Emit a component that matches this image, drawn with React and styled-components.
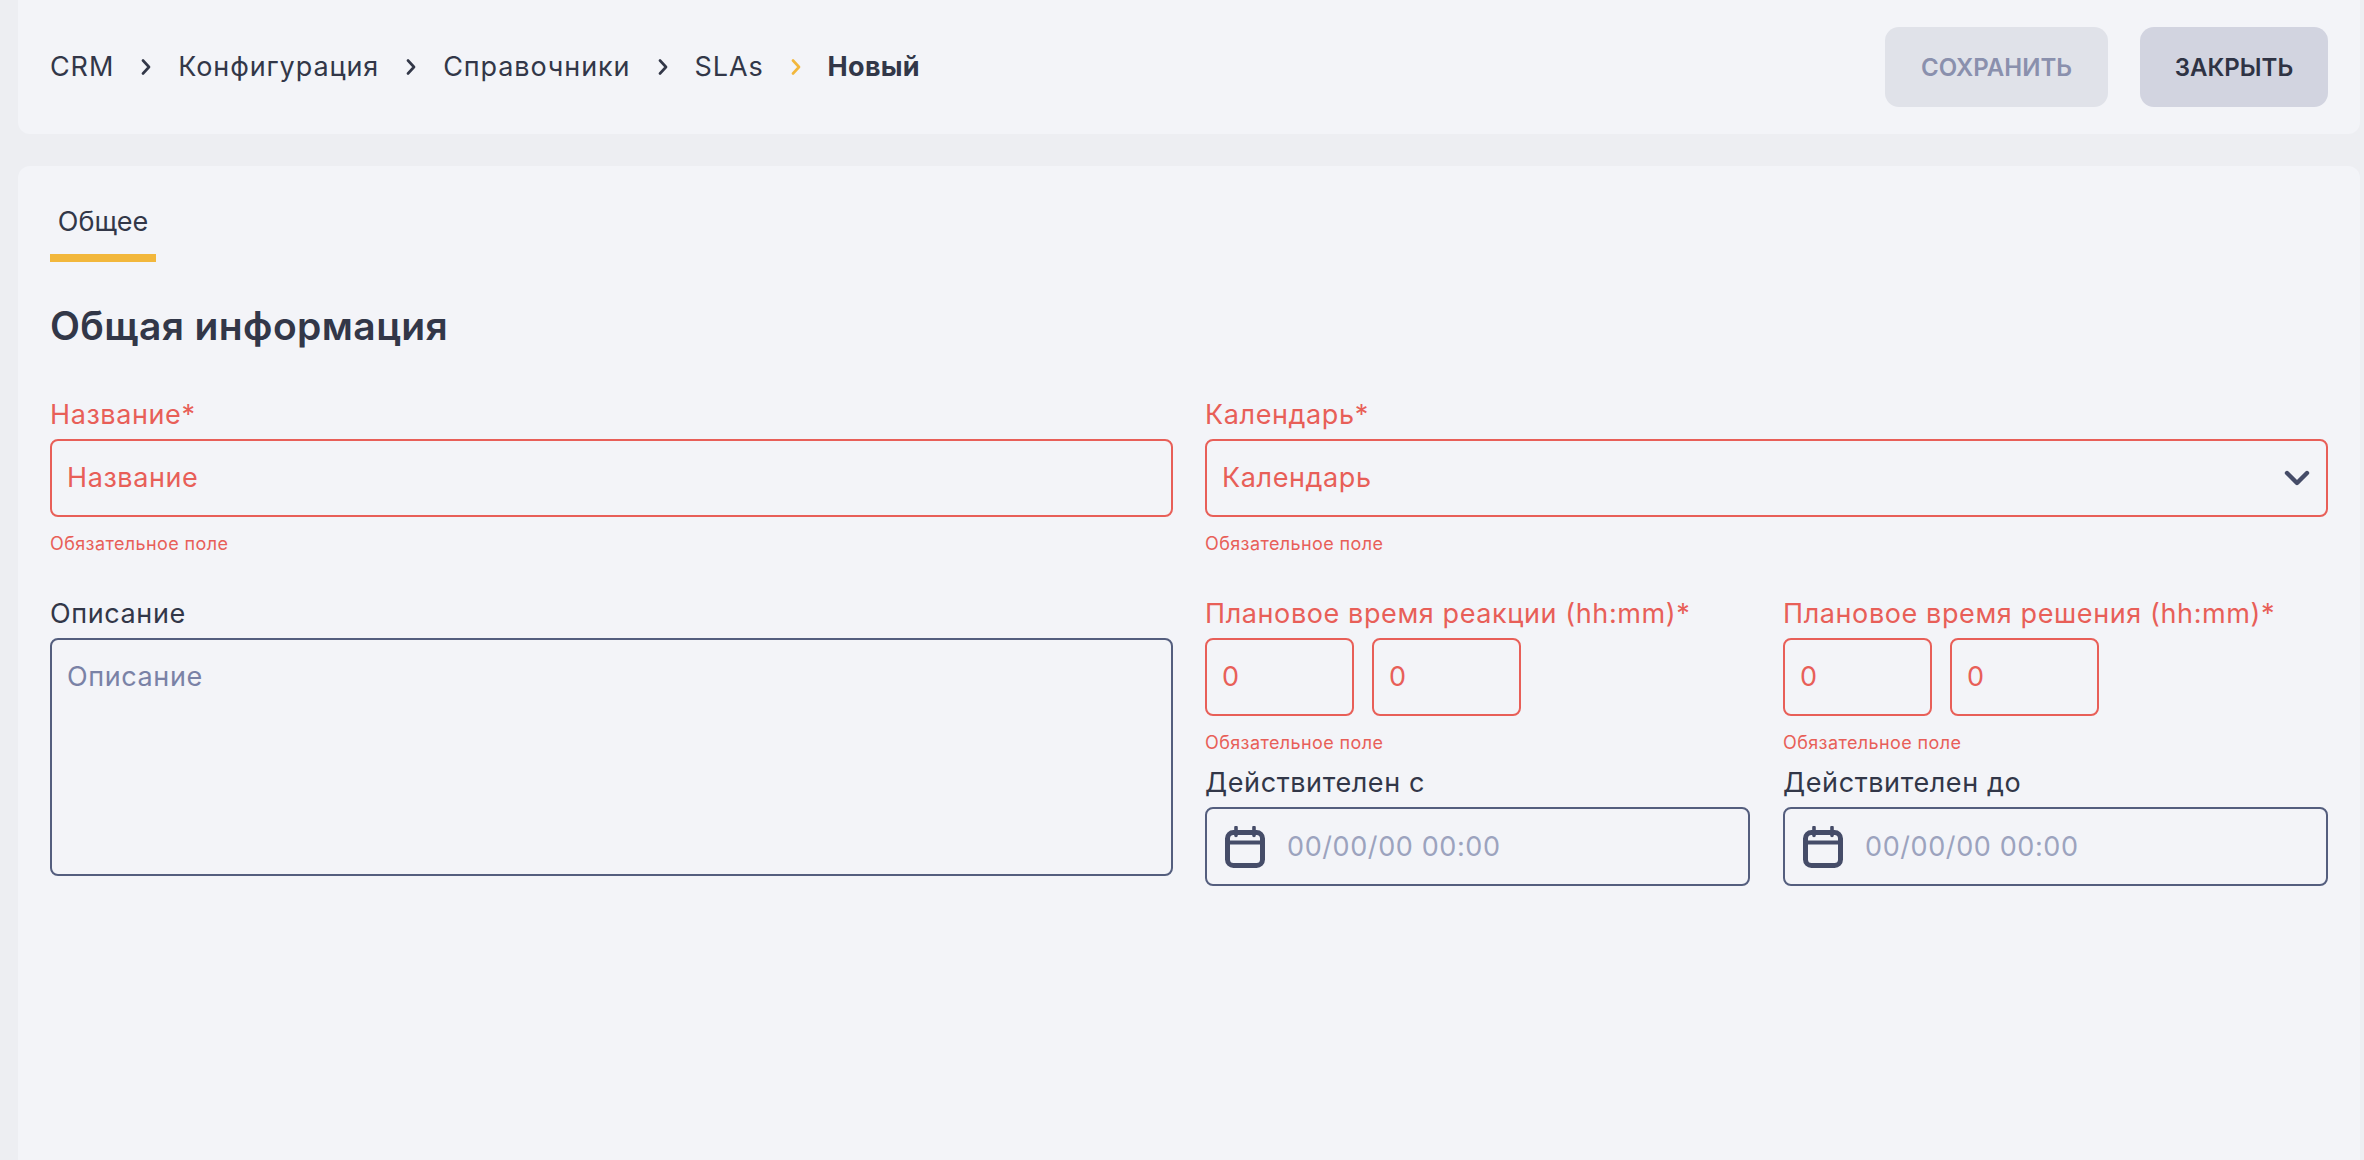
import React from 'react';
import styled, { createGlobalStyle } from 'styled-components';

const RED = '#e85f58';
const DARK = '#323748';

const GlobalStyle = createGlobalStyle`
  html, body {
    margin: 0;
    height: 100%;
    background: #edeef2;
    font-family: Inter, "Noto Sans", sans-serif;
    color: ${DARK};
  }
  * {
    box-sizing: border-box;
  }
`;

const Page = styled.div`
  height: 1160px;
  padding: 0 4px 0 18px;
  display: flex;
  flex-direction: column;
  gap: 32px;
  overflow: hidden;
`;

const TopBar = styled.header`
  flex: 0 0 134px;
  display: flex;
  align-items: center;
  justify-content: space-between;
  padding: 0 32px;
  background: #f3f4f8;
  border-radius: 0 0 12px 12px;
`;

const Crumbs = styled.nav`
  display: flex;
  align-items: center;
  gap: 27px;
`;

const Crumb = styled.span`
  font-size: 27px;
  line-height: 36px;
  font-weight: ${(p) => (p.$current ? 700 : 400)};
  letter-spacing: ${(p) => (p.$current ? '0.3px' : '0.9px')};
  white-space: nowrap;
`;

const Actions = styled.div`
  display: flex;
  gap: 32px;
`;

const Button = styled.button`
  height: 80px;
  width: ${(p) => p.$width}px;
  border: 0;
  border-radius: 14px;
  font-family: inherit;
  font-size: 24px;
  font-weight: 600;
  background: ${(p) => (p.$muted ? '#e0e2e9' : '#d2d4e0')};
  color: ${(p) => (p.$muted ? '#8a90ad' : '#2f3344')};
`;

const Panel = styled.main`
  flex: 1;
  padding: 40px 32px 0;
  background: #f3f4f8;
  border-radius: 12px 12px 0 0;
`;

const Tab = styled.div`
  width: 106px;
  padding-bottom: 16px;
  border-bottom: 8px solid #f2b73c;
  font-size: 27px;
  line-height: 32px;
  text-align: center;
`;

const Heading = styled.h2`
  margin: 40px 0 50px;
  font-size: 39px;
  line-height: 48px;
  font-weight: 600;
  letter-spacing: 0.4px;
`;

const FormGrid = styled.div`
  display: grid;
  grid-template-columns: 1fr 1fr;
  column-gap: 32px;
  row-gap: 44px;
`;

const Field = styled.div`
  min-width: 0;
`;

const Label = styled.div`
  margin-bottom: 9px;
  font-size: 27px;
  line-height: 30px;
  letter-spacing: 0.6px;
  white-space: nowrap;
  color: ${(p) => (p.$error ? RED : DARK)};
`;

const Control = styled.div`
  height: ${(p) => p.$height || 78}px;
  display: flex;
  align-items: ${(p) => (p.$top ? 'flex-start' : 'center')};
  justify-content: space-between;
  padding: ${(p) => (p.$top ? '20px 15px' : '0 15px')};
  gap: 20px;
  border: 2px solid ${(p) => (p.$error ? RED : '#545e7e')};
  border-radius: 8px;
  font-size: 27px;
  line-height: 34px;
  letter-spacing: 0.6px;
  color: ${(p) => (p.$error ? RED : p.$dim ? '#9ca3be' : '#7a82a6')};
`;

const ErrorText = styled.div`
  margin-top: 16px;
  font-size: 18px;
  line-height: 22px;
  letter-spacing: 0.4px;
  color: ${RED};
`;

const SubGrid = styled.div`
  display: grid;
  grid-template-columns: 1fr 1fr;
  column-gap: 33px;
  row-gap: 14px;
`;

const TimePair = styled.div`
  display: flex;
  gap: 18px;
`;

const TimeBox = styled(Control)`
  width: 149px;
`;

const DateControl = styled(Control)`
  justify-content: flex-start;
  gap: 22px;
  padding: 0 18px;
  height: 79px;
`;

const Chevron = ({ color = DARK }) => (
  <svg width="10" height="16" viewBox="0 0 10 16" fill="none">
    <path d="M2 1.5 L8 8 L2 14.5" stroke={color} strokeWidth="2.6" strokeLinecap="round" strokeLinejoin="round" />
  </svg>
);

const SelectArrow = () => (
  <svg width="28" height="18" viewBox="0 0 28 18" fill="none">
    <path d="M4 4 L14 14 L24 4" stroke="#454c68" strokeWidth="4.4" strokeLinecap="round" strokeLinejoin="round" />
  </svg>
);

const CalendarIcon = () => (
  <svg width="40" height="42" viewBox="0 0 40 42" fill="none" style={{ flexShrink: 0 }}>
    <rect x="2.5" y="6.5" width="35" height="33" rx="6" stroke="#454c68" strokeWidth="5" />
    <path d="M2.5 16.5 H37.5" stroke="#454c68" strokeWidth="4" />
    <path d="M11 1.5 V9.5 M29 1.5 V9.5" stroke="#454c68" strokeWidth="3.6" strokeLinecap="round" />
  </svg>
);

const TimeField = ({ label }) => (
  <Field>
    <Label $error>{label}</Label>
    <TimePair>
      <TimeBox $error>0</TimeBox>
      <TimeBox $error>0</TimeBox>
    </TimePair>
    <ErrorText>Обязательное поле</ErrorText>
  </Field>
);

const DateField = ({ label }) => (
  <Field>
    <Label>{label}</Label>
    <DateControl $dim>
      <CalendarIcon />
      00/00/00 00:00
    </DateControl>
  </Field>
);

export default function App() {
  return (
    <>
      <GlobalStyle />
      <Page>
        <TopBar>
          <Crumbs>
            <Crumb>CRM</Crumb>
            <Chevron />
            <Crumb>Конфигурация</Crumb>
            <Chevron />
            <Crumb>Справочники</Crumb>
            <Chevron />
            <Crumb>SLAs</Crumb>
            <Chevron color="#f2b73c" />
            <Crumb $current>Новый</Crumb>
          </Crumbs>
          <Actions>
            <Button $muted $width={223}>СОХРАНИТЬ</Button>
            <Button $width={188}>ЗАКРЫТЬ</Button>
          </Actions>
        </TopBar>
        <Panel>
          <Tab>Общее</Tab>
          <Heading>Общая информация</Heading>
          <FormGrid>
            <Field>
              <Label $error>Название*</Label>
              <Control $error>Название</Control>
              <ErrorText>Обязательное поле</ErrorText>
            </Field>
            <Field>
              <Label $error>Календарь*</Label>
              <Control $error>
                Календарь
                <SelectArrow />
              </Control>
              <ErrorText>Обязательное поле</ErrorText>
            </Field>
            <Field>
              <Label>Описание</Label>
              <Control $top $height={238}>Описание</Control>
            </Field>
            <SubGrid>
              <TimeField label="Плановое время реакции (hh:mm)*" />
              <TimeField label="Плановое время решения (hh:mm)*" />
              <DateField label="Действителен с" />
              <DateField label="Действителен до" />
            </SubGrid>
          </FormGrid>
        </Panel>
      </Page>
    </>
  );
}
